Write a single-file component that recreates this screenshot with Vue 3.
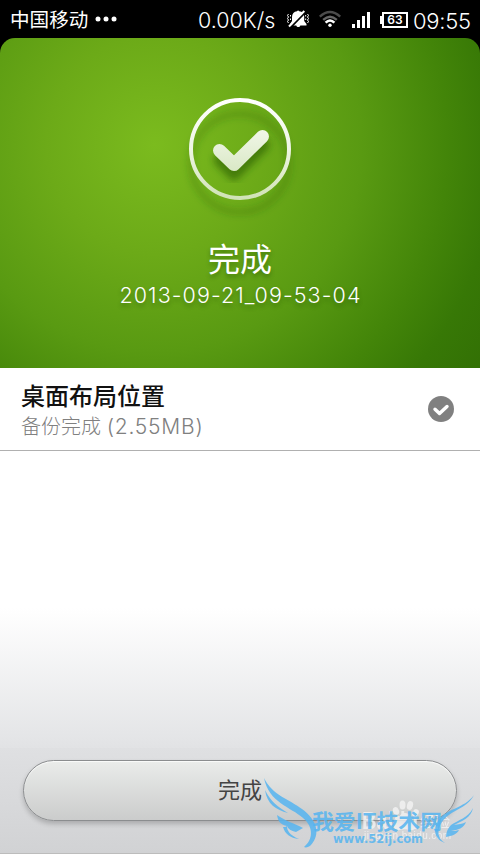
<script setup>
const status = { carrier: '中国移动', speed: '0.00K/s', battery: '63', time: '09:55' }
const backup = { title: '完成', name: '2013-09-21_09-53-04' }
const items = [{ title: '桌面布局位置', detail: '备份完成', size: '(2.55MB)' }]
</script>

<template>
  <div class="screen">
    <header class="status">
      <span class="carrier">{{ status.carrier }}</span>
      <svg class="dots" width="22" height="6" viewBox="0 0 22 6" fill="#fff">
        <circle cx="3" cy="3" r="2.5" /><circle cx="11" cy="3" r="2.5" /><circle cx="19" cy="3" r="2.5" />
      </svg>
      <span class="speed">{{ status.speed }}</span>
      <svg class="bell" width="22" height="18" viewBox="0 0 22 18" fill="#fff">
        <path d="M3 15.500V14l2-3V7c0-3.400 2-5.500 5-5.800.4-.9 1.800-.9 2.200 0C15.500 1.500 17.200 3.600 17.200 7v4l2.300 3v1.500h-6.200c-.5 2-3.500 2-4 0z" />
        <path d="M3.500 17.500 19 1.500" stroke="#000" stroke-width="2" />
        <path d="M2 16.500 17.300 1" stroke="#fff" stroke-width="2" />
        <path d="M1.500 4 .5 5.500l1 1.500-1 1.500 1 1.500-1 1.500 1 1.500M3.500 5v1.500M3.500 8.500V10M20.500 4l1 1.500-1 1.500 1 1.500-1 1.500 1 1.500-1 1.500M18.700 5v1.500M18.700 8.500V10" fill="none" stroke="#fff" />
      </svg>
      <svg class="wifi" width="22" height="18" viewBox="0 0 22 18" fill="none" stroke-width="2.400">
        <path d="M.8 6.600Q11-2.600 21.200 6.600" stroke="#4c4c4c" />
        <path d="M4.200 9.900Q11 3.600 17.800 9.900" stroke="#666" />
        <path d="M6.600 12.700Q11 8.200 15.400 12.700" stroke="#fff" stroke-width="2.500" />
        <circle cx="11" cy="15.300" r="1.700" fill="#fff" />
      </svg>
      <svg class="signal" width="18" height="16" viewBox="0 0 18 16" fill="#fff">
        <path d="M0 12h3v4H0zM5 8h3v8H5zM10 4h3v12h-3zM15 0h3v16h-3z" />
      </svg>
      <span class="battery">{{ status.battery }}</span>
      <span class="time">{{ status.time }}</span>
    </header>

    <section class="hero">
      <svg class="badge" width="140" height="140" viewBox="0 0 140 140" fill="none">
        <defs>
          <linearGradient id="ringFill" gradientUnits="userSpaceOnUse" x1="0" y1="10" x2="0" y2="112">
            <stop stop-color="#fff" /><stop offset=".5" stop-color="#eef5e3" /><stop offset="1" stop-color="#cfe2b4" />
          </linearGradient>
          <linearGradient id="tickFill" gradientUnits="userSpaceOnUse" x1="0" y1="40" x2="0" y2="84">
            <stop stop-color="#f2f7e9" /><stop offset="1" stop-color="#d9e8c5" />
          </linearGradient>
          <filter id="soft" x="-30%" y="-30%" width="160%" height="160%"><feGaussianBlur stdDeviation="3.500" /></filter>
        </defs>
        <circle cx="70" cy="75" r="49" stroke="#245c00" stroke-opacity=".32" stroke-width="5" filter="url(#soft)" />
        <path d="M50 72 64 86 93 57" stroke="#245c00" stroke-opacity=".6" stroke-width="13" stroke-linecap="round" stroke-linejoin="round" filter="url(#soft)" />
        <circle cx="70" cy="61" r="49" stroke="url(#ringFill)" stroke-width="4" />
        <path d="M49.500 62.500 64 76.500 92.500 48.500" stroke="url(#tickFill)" stroke-width="13" stroke-linecap="round" stroke-linejoin="round" />
      </svg>
      <h1>{{ backup.title }}</h1>
      <p class="name">{{ backup.name }}</p>
    </section>

    <main class="list">
      <div v-for="item in items" :key="item.title" class="row">
        <div class="copy">
          <div class="title">{{ item.title }}</div>
          <div class="detail">{{ item.detail }} <span class="size">{{ item.size }}</span></div>
        </div>
        <svg width="26" height="26" viewBox="0 0 26 26" fill="none">
          <circle cx="13" cy="13" r="13" fill="#808080" />
          <path d="M7 13.200 11.500 17.500 19 10.500" stroke="#fff" stroke-width="3.400" stroke-linecap="round" stroke-linejoin="round" />
        </svg>
      </div>
    </main>

    <footer class="actions">
      <button class="done">完成</button>
    </footer>

    <svg class="watermark" width="230" height="104" viewBox="0 0 230 104">
      <g fill="#f4f4f4" opacity=".8">
        <ellipse cx="146" cy="61" rx="3" ry="4" transform="rotate(-20 146 61)" />
        <ellipse cx="152.500" cy="55" rx="3" ry="4.500" />
        <ellipse cx="160" cy="55.500" rx="3" ry="4.500" transform="rotate(15 160 55.500)" />
        <ellipse cx="165.500" cy="63" rx="3" ry="4" transform="rotate(30 165.500 63)" />
        <path d="M155 63c5 0 6 5 9 8 5 5 1 10-4 9-4-1-6-1-10 0-5 1-9-4-4-9 3-3 4-8 9-8z" />
        <text class="baidu" x="112" y="79" textLength="56" lengthAdjust="spacingAndGlyphs">Baidu</text>
        <text class="jingyan" x="170" y="77" textLength="30">经验</text>
        <text class="domain" x="114" y="89" textLength="87">jingyan.baidu.com</text>
      </g>
      <g fill="#55b4f0" fill-opacity=".85">
        <path d="M14 28C22 45 39 49 52 59c15 11 19 25 9 36-2 2-5 3-7 2 9-7 10-20-1-29C41 57 19 53 14 28z" />
        <path d="M15 40c6 12 13 17 23 23-12-3-21-9-23-23zM27 65c8 6 17 8 26 13l-7 4c-5-1-8-3-9-6 0 4 2 9 12 13-9-1-14-5-16-12 2 0 3 0 4-1-8-2-9-6-10-11z" />
        <path d="M224 45c-8 15-23 14-32 27-6 9-4 17 3 21-9-3-13-12-7-22 8-13 26-12 36-26z" />
        <path d="M223 58c-5 10-15 12-22 17-3 3-5 7-5 12 6-1 11-3 13-7-3 1-5 1-8 1 7-1 13-3 15-9-3 2-8 2-12 3 8-4 17-7 19-17z" />
        <text class="site" x="62" y="79" textLength="130" lengthAdjust="spacingAndGlyphs">我爱IT技术网</text>
        <text class="url" x="83" y="93" textLength="90" lengthAdjust="spacingAndGlyphs">www.52ij.com</text>
      </g>
    </svg>
  </div>
</template>

<style>
body { margin: 0; background: #000; }
</style>

<style scoped>
.screen {
  position: relative;
  display: flex;
  flex-direction: column;
  width: 480px;
  height: 854px;
  overflow: hidden;
  background: #000;
  font-family: Inter, "Noto Sans CJK SC", sans-serif;
}
.status {
  display: flex;
  align-items: center;
  flex: none;
  box-sizing: border-box;
  height: 38px;
  padding: 0 9px 0 10px;
  color: #fff;
  white-space: nowrap;
}
.carrier { font-size: 19.600px; line-height: 38px; padding-top: 1px; }
.dots { margin-left: 7px; }
.speed {
  width: 80px;
  margin-left: auto;
  font-size: 21.500px;
  font-weight: 300;
  padding-top: 2px;
}
.bell { margin-left: 9px; }
.wifi { margin-left: 10px; }
.signal { margin: 1px 0 0 11px; }
.battery {
  position: relative;
  box-sizing: border-box;
  width: 26px;
  height: 16px;
  margin: 1px 5px 0 12px;
  border: 2px solid #fff;
  font: 600 12px/12px Inter, sans-serif;
  text-align: center;
}
.battery::before {
  content: "";
  position: absolute;
  top: 2px;
  left: -4px;
  width: 2px;
  height: 8px;
  background: #fff;
}
.time {
  width: 58px;
  padding-top: 3px;
  font-size: 22px;
  font-weight: 300;
  letter-spacing: -.3px;
}
.hero {
  display: flex;
  flex-direction: column;
  align-items: center;
  flex: none;
  box-sizing: border-box;
  height: 330px;
  padding-top: 50px;
  border-radius: 15px 15px 0 0;
  background: radial-gradient(circle 390px at 155px 107px, #7bbb1e 0, #6caa18 28%, #599a12 53%, #438509 75%, #377806 88%, #337105 100%);
  color: #fff;
  text-shadow: 0 3px 4px rgba(30, 75, 0, .45);
}
.badge { flex: none; }
h1 {
  margin: 12px 0 0;
  font-size: 32px;
  font-weight: 400;
  line-height: 40px;
}
.name {
  margin: 2px 0 0;
  font-size: 21.500px;
  font-weight: 300;
  line-height: 26px;
  letter-spacing: 1.080px;
  padding-left: 1px;
}
.list {
  flex: 1;
  background: linear-gradient(#fff 0, #fff 240px, #e4e5e7 370px, #dfe0e2 390px);
}
.row {
  display: flex;
  align-items: center;
  justify-content: space-between;
  box-sizing: border-box;
  height: 83px;
  padding: 0 26px 0 21px;
  border-bottom: 1px solid #b0b0b0;
  background: #fff;
}
.copy { padding-top: 4px; }
.title {
  color: #111;
  font-size: 24px;
  font-weight: 500;
  line-height: 32px;
}
.detail {
  color: #808080;
  font-size: 20px;
  font-weight: 300;
  line-height: 28px;
}
.size { font-size: 21px; letter-spacing: .8px; }
.actions {
  flex: none;
  box-sizing: border-box;
  height: 106px;
  padding: 12px 23px 0;
  border-bottom: 1px solid #bcbcbc;
  background: linear-gradient(#dfe0e2, #d1d2d4);
}
.done {
  display: block;
  box-sizing: border-box;
  width: 434px;
  height: 61px;
  padding: 0 0 5px;
  border: 1px solid #8b8d8f;
  border-radius: 31px;
  background: linear-gradient(#eaecea, #cbcccc);
  box-shadow: 0 3px 5px rgba(0, 0, 0, .2), inset 0 1px 1px rgba(255, 255, 255, .8);
  color: #444;
  font: 400 22px/54px "Noto Sans CJK SC", sans-serif;
}
.watermark {
  position: absolute;
  left: 250px;
  top: 750px;
}
.baidu { font: 700 24px "Liberation Sans", sans-serif; }
.jingyan { font: 400 15px "Noto Sans CJK SC", sans-serif; }
.domain { font: 400 10px "Liberation Sans", sans-serif; }
.site { font: 700 21px "Noto Sans CJK SC", sans-serif; }
.url { font: 700 12px "DejaVu Sans", sans-serif; }
</style>
